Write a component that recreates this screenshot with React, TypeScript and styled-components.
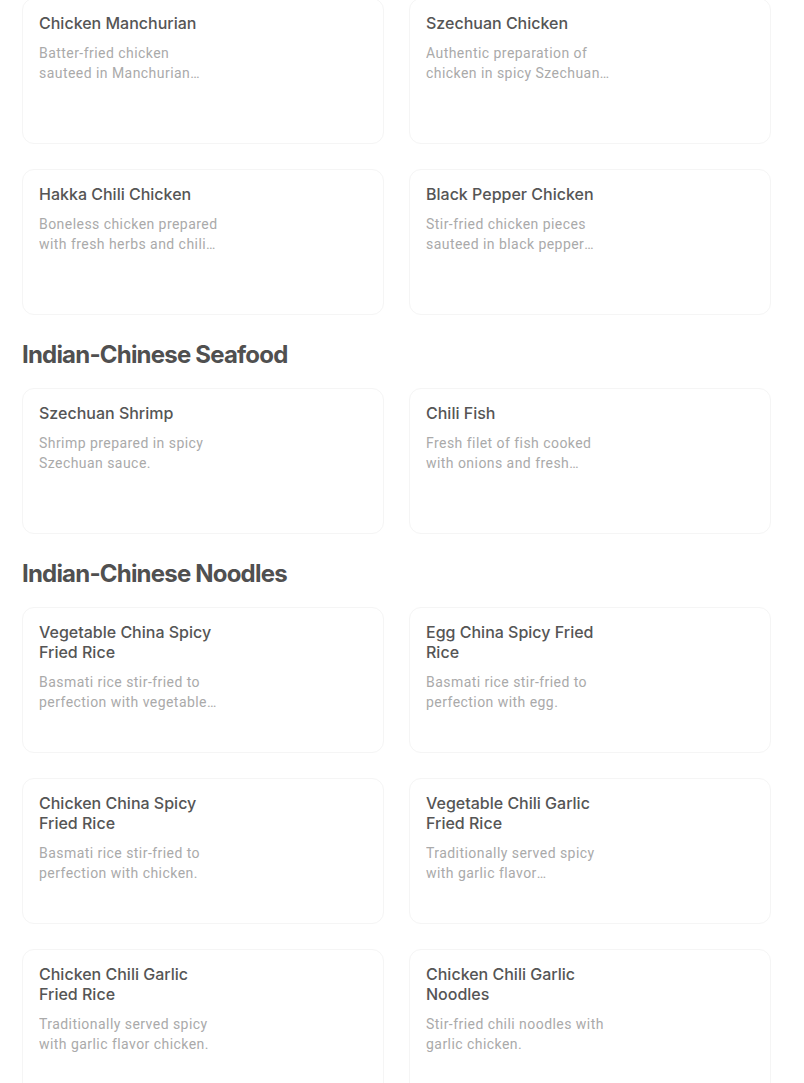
import React from 'react'
import styled, { createGlobalStyle } from 'styled-components'

const GlobalStyle = createGlobalStyle`
  body {
    margin: 0;
    background: #fff;
    font-family: Roboto, 'Liberation Sans', sans-serif;
  }
`

const Page = styled.div`
  width: 749px;
  padding: 0 22px 40px;
  margin-top: -2px;
`

const Section = styled.section`
  display: flex;
  flex-direction: column;
`

const Heading = styled.h2`
  margin: 24px 0 17px;
  font-family: Inter, 'Liberation Sans', sans-serif;
  font-size: 24px;
  line-height: 32px;
  font-weight: 700;
  letter-spacing: -0.8px;
  color: #505050;
`

const Grid = styled.div`
  display: grid;
  grid-template-columns: 1fr 1fr;
  column-gap: 25px;
  row-gap: 25px;
`

const Card = styled.div`
  box-sizing: border-box;
  height: 146px;
  padding: 14px 16px;
  border: 1px solid #f5f5f5;
  border-radius: 12px;
  background: #fff;
  display: grid;
  grid-template-columns: 184px 1fr;
  align-content: start;
`

const Info = styled.div`
  display: flex;
  flex-direction: column;
  gap: 10px;
`

const Title = styled.div`
  font-family: Inter, 'Liberation Sans', sans-serif;
  font-size: 16px;
  line-height: 20px;
  font-weight: 500;
  color: #555;
`

const Desc = styled.div`
  font-size: 14px;
  line-height: 20px;
  letter-spacing: 0.45px;
  color: #aaa;
  display: -webkit-box;
  -webkit-line-clamp: 2;
  -webkit-box-orient: vertical;
  overflow: hidden;
`

type Dish = { name: string; desc: string }

const chicken: Dish[] = [
  { name: 'Chicken Manchurian', desc: 'Batter-fried chicken sauteed in Manchurian sauce with garlic and ginger.' },
  { name: 'Szechuan Chicken', desc: 'Authentic preparation of chicken in spicy Szechuan sauce.' },
  { name: 'Hakka Chili Chicken', desc: 'Boneless chicken prepared with fresh herbs and chili sauce.' },
  { name: 'Black Pepper Chicken', desc: 'Stir-fried chicken pieces sauteed in black pepper sauce.' },
]

const seafood: Dish[] = [
  { name: 'Szechuan Shrimp', desc: 'Shrimp prepared in spicy Szechuan sauce.' },
  { name: 'Chili Fish', desc: 'Fresh filet of fish cooked with onions and fresh green chilies.' },
]

const noodles: Dish[] = [
  { name: 'Vegetable China Spicy Fried Rice', desc: 'Basmati rice stir-fried to perfection with vegetables. Spicy.' },
  { name: 'Egg China Spicy Fried Rice', desc: 'Basmati rice stir-fried to perfection with egg.' },
  { name: 'Chicken China Spicy Fried Rice', desc: 'Basmati rice stir-fried to perfection with chicken.' },
  { name: 'Vegetable Chili Garlic Fried Rice', desc: 'Traditionally served spicy with garlic flavor vegetables.' },
  { name: 'Chicken Chili Garlic Fried Rice', desc: 'Traditionally served spicy with garlic flavor chicken.' },
  { name: 'Chicken Chili Garlic Noodles', desc: 'Stir-fried chili noodles with garlic chicken.' },
]

const DishGrid: React.FC<{ items: Dish[] }> = ({ items }) => (
  <Grid>
    {items.map((d) => (
      <Card key={d.name}>
        <Info>
          <Title>{d.name}</Title>
          <Desc>{d.desc}</Desc>
        </Info>
      </Card>
    ))}
  </Grid>
)

const App: React.FC = () => {
  return (
    <Page>
      <GlobalStyle />
      <Section>
        <DishGrid items={chicken} />
      </Section>
      <Section>
        <Heading>Indian-Chinese Seafood</Heading>
        <DishGrid items={seafood} />
      </Section>
      <Section>
        <Heading>Indian-Chinese Noodles</Heading>
        <DishGrid items={noodles} />
      </Section>
    </Page>
  )
}

export default App
